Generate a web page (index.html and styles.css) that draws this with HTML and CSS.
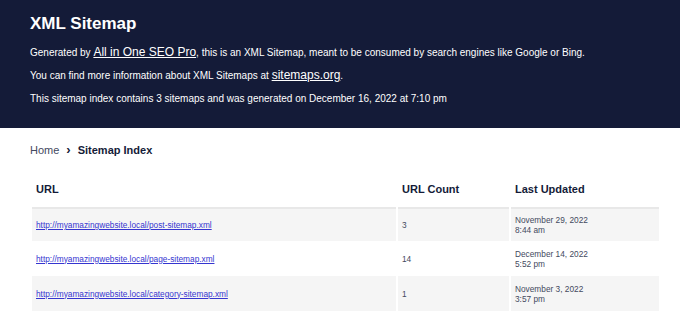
FILE: index.html
```html
<!DOCTYPE html>
<html>
<head>
<meta charset="utf-8">
<title>XML Sitemap</title>
<link rel="stylesheet" href="styles.css">
</head>
<body>
<header class="banner">
  <h1 class="title">XML Sitemap</h1>
  <p class="info">Generated by <a class="big-link" href="#">All in One SEO Pro</a>, this is an XML Sitemap, meant to be consumed by search engines like Google or Bing.</p>
  <p class="info">You can find more information about XML Sitemaps at <a class="big-link" href="#">sitemaps.org</a>.</p>
  <p class="info">This sitemap index contains 3 sitemaps and was generated on December 16, 2022 at 7:10 pm</p>
</header>
<main class="content">
  <nav class="breadcrumb">
    <span class="crumb">Home</span>
    <span class="sep">&#8250;</span>
    <span class="crumb current">Sitemap Index</span>
  </nav>
  <table class="sitemaps">
    <thead>
      <tr>
        <th class="col-url">URL</th>
        <th class="col-count">URL Count</th>
        <th class="col-date">Last Updated</th>
      </tr>
    </thead>
    <tbody>
      <tr class="row shaded first">
        <td><a class="url" href="#">http://myamazingwebsite.local/post-sitemap.xml</a></td>
        <td class="count">3</td>
        <td class="date">November 29, 2022<br>8:44 am</td>
      </tr>
      <tr class="row">
        <td><a class="url" href="#">http://myamazingwebsite.local/page-sitemap.xml</a></td>
        <td class="count">14</td>
        <td class="date">December 14, 2022<br>5:52 pm</td>
      </tr>
      <tr class="row shaded">
        <td><a class="url" href="#">http://myamazingwebsite.local/category-sitemap.xml</a></td>
        <td class="count">1</td>
        <td class="date">November 3, 2022<br>3:57 pm</td>
      </tr>
    </tbody>
  </table>
</main>
</body>
</html>
```
FILE: styles.css
```css
html, body {
  margin: 0;
  padding: 0;
  background: #ffffff;
  font-family: "Liberation Sans", Arial, sans-serif;
  color: #141b38;
}

.banner {
  box-sizing: border-box;
  background: #141b38;
  color: #ffffff;
  padding: 13px 30px 0 30px;
  height: 128px;
}

.title {
  margin: 0 0 6px 0;
  font-size: 17px;
  font-weight: bold;
  line-height: 22px;
}

.info {
  margin: 0;
  font-size: 10px;
  line-height: 23px;
  height: 23px;
  color: #ffffff;
}

.big-link {
  color: #ffffff;
  font-size: 12px;
  line-height: 1;
  text-decoration: underline;
}

.content {
  padding: 14px 19px 0 30px;
}

.breadcrumb {
  display: flex;
  align-items: center;
  gap: 6px;
  font-size: 11px;
  line-height: 16px;
  height: 16px;
  margin-bottom: 13px;
}

.crumb {
  color: #434960;
}

.sep {
  color: #141b38;
  font-size: 13px;
  font-weight: bold;
  padding: 0 1px;
}

.crumb.current {
  color: #141b38;
  font-weight: bold;
}

.sitemaps {
  width: 100%;
  table-layout: fixed;
  border-collapse: separate;
  border-spacing: 2px 0;
}

.sitemaps th {
  text-align: left;
  font-size: 11px;
  font-weight: bold;
  color: #141b38;
  padding: 0 4px;
  height: 36px;
  vertical-align: middle;
}

.col-url { width: 356px; }
.col-count { width: 103px; }

.sitemaps td {
  height: 35px;
  padding: 0 4px;
  vertical-align: middle;
  font-size: 8.3px;
  line-height: 10px;
  color: #434960;
}

.row.shaded td {
  background: #f5f5f5;
}

.row.first td {
  border-top: 2px solid #e8e8e8;
  height: 32px;
}

.url {
  color: #3535d0;
  font-size: 8.3px;
  text-decoration: underline;
}

.count {
  font-size: 8.3px;
}
```
